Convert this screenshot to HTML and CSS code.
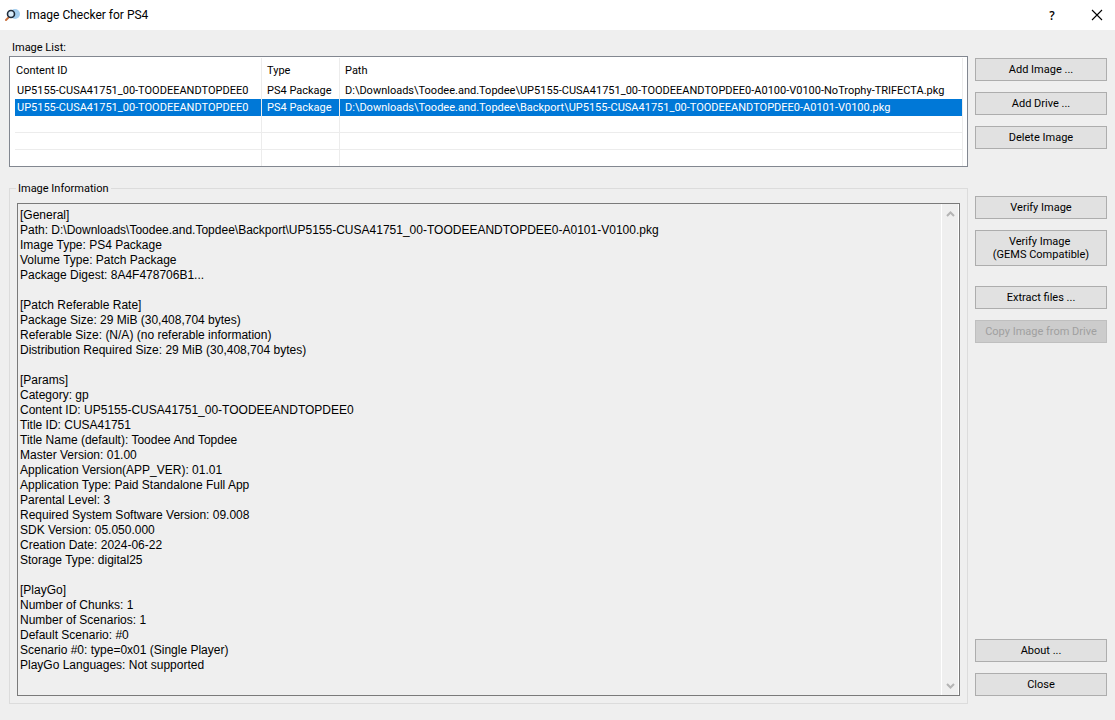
FILE: index.html
```html
<!DOCTYPE html>
<html lang="en">
<head>
    <meta charset="UTF-8">
    <meta name="viewport" content="width=device-width, initial-scale=1.0">
    <title>Image Checker for PS4</title>
    <link rel="stylesheet" href="styles.css">
</head>
<body>
    <header class="titlebar">
        <svg class="logo" width="16" height="16" viewBox="0 0 16 16">
            <circle cx="10" cy="7" r="5" fill="#a3cdee"/>
            <path d="M4 10 L1 13" stroke="#c9703e" stroke-width="2" stroke-linecap="round"/>
            <circle cx="6" cy="7" r="3.500" fill="#d9ecfa" stroke="#1d2b3a" stroke-width="1.600"/>
        </svg>
        <h1>Image Checker for PS4</h1>
        <button class="win-btn" type="button">?</button>
        <button class="win-btn" type="button" aria-label="Close window">
            <svg width="12" height="12" viewBox="0 0 12 12">
                <path d="M1 1 L11 11 M11 1 L1 11" stroke="#000" stroke-width="1.1" fill="none"/>
            </svg>
        </button>
    </header>

    <main class="content">
        <div class="left">
            <h2 class="list-title" id="list-title">Image List:</h2>
            <div class="list">
                <table aria-labelledby="list-title">
                    <colgroup>
                        <col class="col-id">
                        <col class="col-type">
                        <col>
                    </colgroup>
                    <thead>
                        <tr><th>Content ID</th><th>Type</th><th>Path</th></tr>
                    </thead>
                    <tbody>
                        <tr>
                            <td>UP5155-CUSA41751_00-TOODEEANDTOPDEE0</td>
                            <td>PS4 Package</td>
                            <td>D:\Downloads\Toodee.and.Topdee\UP5155-CUSA41751_00-TOODEEANDTOPDEE0-A0100-V0100-NoTrophy-TRIFECTA.pkg</td>
                        </tr>
                        <tr class="selected">
                            <td>UP5155-CUSA41751_00-TOODEEANDTOPDEE0</td>
                            <td>PS4 Package</td>
                            <td>D:\Downloads\Toodee.and.Topdee\Backport\UP5155-CUSA41751_00-TOODEEANDTOPDEE0-A0101-V0100.pkg</td>
                        </tr>
                        <tr class="empty"><td></td><td></td><td></td></tr>
                        <tr class="empty"><td></td><td></td><td></td></tr>
                        <tr class="empty last"><td></td><td></td><td></td></tr>
                    </tbody>
                </table>
            </div>

            <fieldset class="group">
                <legend><label for="info">Image Information</label></legend>
                <div class="info-box">
                    <textarea id="info" readonly>[General]
Path: D:\Downloads\Toodee.and.Topdee\Backport\UP5155-CUSA41751_00-TOODEEANDTOPDEE0-A0101-V0100.pkg
Image Type: PS4 Package
Volume Type: Patch Package
Package Digest: 8A4F478706B1...

[Patch Referable Rate]
Package Size: 29 MiB (30,408,704 bytes)
Referable Size: (N/A) (no referable information)
Distribution Required Size: 29 MiB (30,408,704 bytes)

[Params]
Category: gp
Content ID: UP5155-CUSA41751_00-TOODEEANDTOPDEE0
Title ID: CUSA41751
Title Name (default): Toodee And Topdee
Master Version: 01.00
Application Version(APP_VER): 01.01
Application Type: Paid Standalone Full App
Parental Level: 3
Required System Software Version: 09.008
SDK Version: 05.050.000
Creation Date: 2024-06-22
Storage Type: digital25

[PlayGo]
Number of Chunks: 1
Number of Scenarios: 1
Default Scenario: #0
Scenario #0: type=0x01 (Single Player)
PlayGo Languages: Not supported</textarea>
                    <div class="scroll">
                        <svg width="9" height="6" viewBox="0 0 9 6">
                            <path d="M1 5 L4.500 1.500 L8 5" stroke="#b4b4b4" stroke-width="2" fill="none"/>
                        </svg>
                        <svg width="9" height="6" viewBox="0 0 9 6">
                            <path d="M1 1 L4.500 4.500 L8 1" stroke="#b4b4b4" stroke-width="2" fill="none"/>
                        </svg>
                    </div>
                </div>
            </fieldset>
        </div>

        <div class="actions">
            <div class="btn-group">
                <button type="button">Add Image ...</button>
                <button type="button">Add Drive ...</button>
                <button type="button">Delete Image</button>
            </div>
            <div class="btn-group verify">
                <button type="button">Verify Image</button>
                <button type="button" class="tall">Verify Image&nbsp;<br>(GEMS Compatible)</button>
            </div>
            <div class="btn-group extract">
                <button type="button">Extract files ...</button>
                <button type="button" disabled>Copy Image from Drive</button>
            </div>
            <div class="btn-group bottom">
                <button type="button">About ...</button>
                <button type="button">Close</button>
            </div>
        </div>
    </main>
</body>
</html>
```
FILE: styles.css
```css
* {
    box-sizing: border-box;
}
body {
    margin: 0;
    min-height: 100vh;
    display: flex;
    flex-direction: column;
    background-color: #efefef;
    color: #000;
    font-family: Roboto, "Liberation Sans", sans-serif;
    font-size: 11px;
}

/* title bar */
.titlebar {
    display: flex;
    align-items: center;
    height: 30px;
    padding-left: 5px;
    background-color: #fff;
}
.titlebar h1 {
    flex: 1;
    margin: 0 0 0 5px;
    font-size: 12px;
    font-weight: normal;
}
.win-btn {
    display: flex;
    align-items: center;
    justify-content: center;
    width: 45px;
    height: 30px;
    padding: 0 0 0 9px;
    border: none;
    background: none;
    font-family: "Open Sans", sans-serif;
    font-size: 12px;
    font-weight: 600;
}
.win-btn:hover {
    background-color: #e5e5e5;
}

/* main area */
.content {
    flex: 1;
    display: grid;
    grid-template-columns: minmax(0, 1fr) 132px;
    gap: 7px;
    padding: 0 8px 16px 9px;
}
.left {
    display: flex;
    flex-direction: column;
}
.list-title {
    margin: 0;
    padding: 10px 0 0 3px;
    font-size: 11px;
    font-weight: normal;
    line-height: 16px;
}
.list {
    height: 111px;
    padding: 1px 4px 0 5px;
    border: 1px solid #828790;
    background-color: #fff;
    overflow: hidden;
}
table {
    width: 100%;
    table-layout: fixed;
    border-collapse: separate;
    border-spacing: 0;
}
.col-id {
    width: 247px;
}
.col-type {
    width: 78px;
}
th, td {
    height: 17px;
    padding: 0 0 0 5px;
    border-right: 1px solid #ececec;
    font-weight: normal;
    text-align: left;
    line-height: 16px;
    white-space: nowrap;
}
td:first-child {
    padding-left: 2px;
}
th {
    height: 24px;
    padding-top: 2px;
}
th:first-child {
    padding-left: 1px;
}
.selected td {
    background-color: #0078d7;
    color: #fff;
}
.empty td {
    border-bottom: 1px solid #ececec;
}
.last td {
    border-bottom: none;
}

/* information group */
.group {
    flex: 1;
    display: flex;
    min-width: 0;
    margin: 15px 0 0;
    padding: 8px 7px 7px;
    border: 1px solid #dcdcdc;
}
legend {
    height: 13px;
    padding: 0 2px;
    margin-left: -1px;
    line-height: 13px;
}
.info-box {
    flex: 1;
    display: flex;
    border: 1px solid #7a7a7a;
}
textarea {
    flex: 1;
    min-width: 0;
    padding: 4px 2px;
    border: none;
    outline: none;
    resize: none;
    overflow: hidden;
    background-color: transparent;
    color: #000;
    font-family: "Liberation Sans", Arial, sans-serif;
    font-size: 12px;
    line-height: 15px;
}
.scroll {
    display: flex;
    flex-direction: column;
    justify-content: space-between;
    align-items: center;
    width: 18px;
    padding: 7px 0 6px;
    border: 1px solid #fff;
    border-width: 0 1px;
}

/* buttons on the right */
.actions {
    display: flex;
    flex-direction: column;
    padding: 28px 0 8px;
}
.btn-group {
    display: flex;
    flex-direction: column;
    gap: 11px;
}
.verify {
    margin-top: 47px;
}
.extract {
    margin-top: 20px;
}
.bottom {
    margin-top: auto;
}
.actions button {
    height: 23px;
    padding: 0;
    border: 1px solid #adadad;
    background-color: #e1e1e1;
    color: #000;
    font-family: inherit;
    font-size: 11px;
    line-height: 13px;
}
.actions button:hover {
    border-color: #0078d7;
}
.actions .tall {
    height: 36px;
}
.actions button:disabled {
    border-color: #bfbfbf;
    background-color: #cccccc;
    color: #a0a0a0;
}
```
